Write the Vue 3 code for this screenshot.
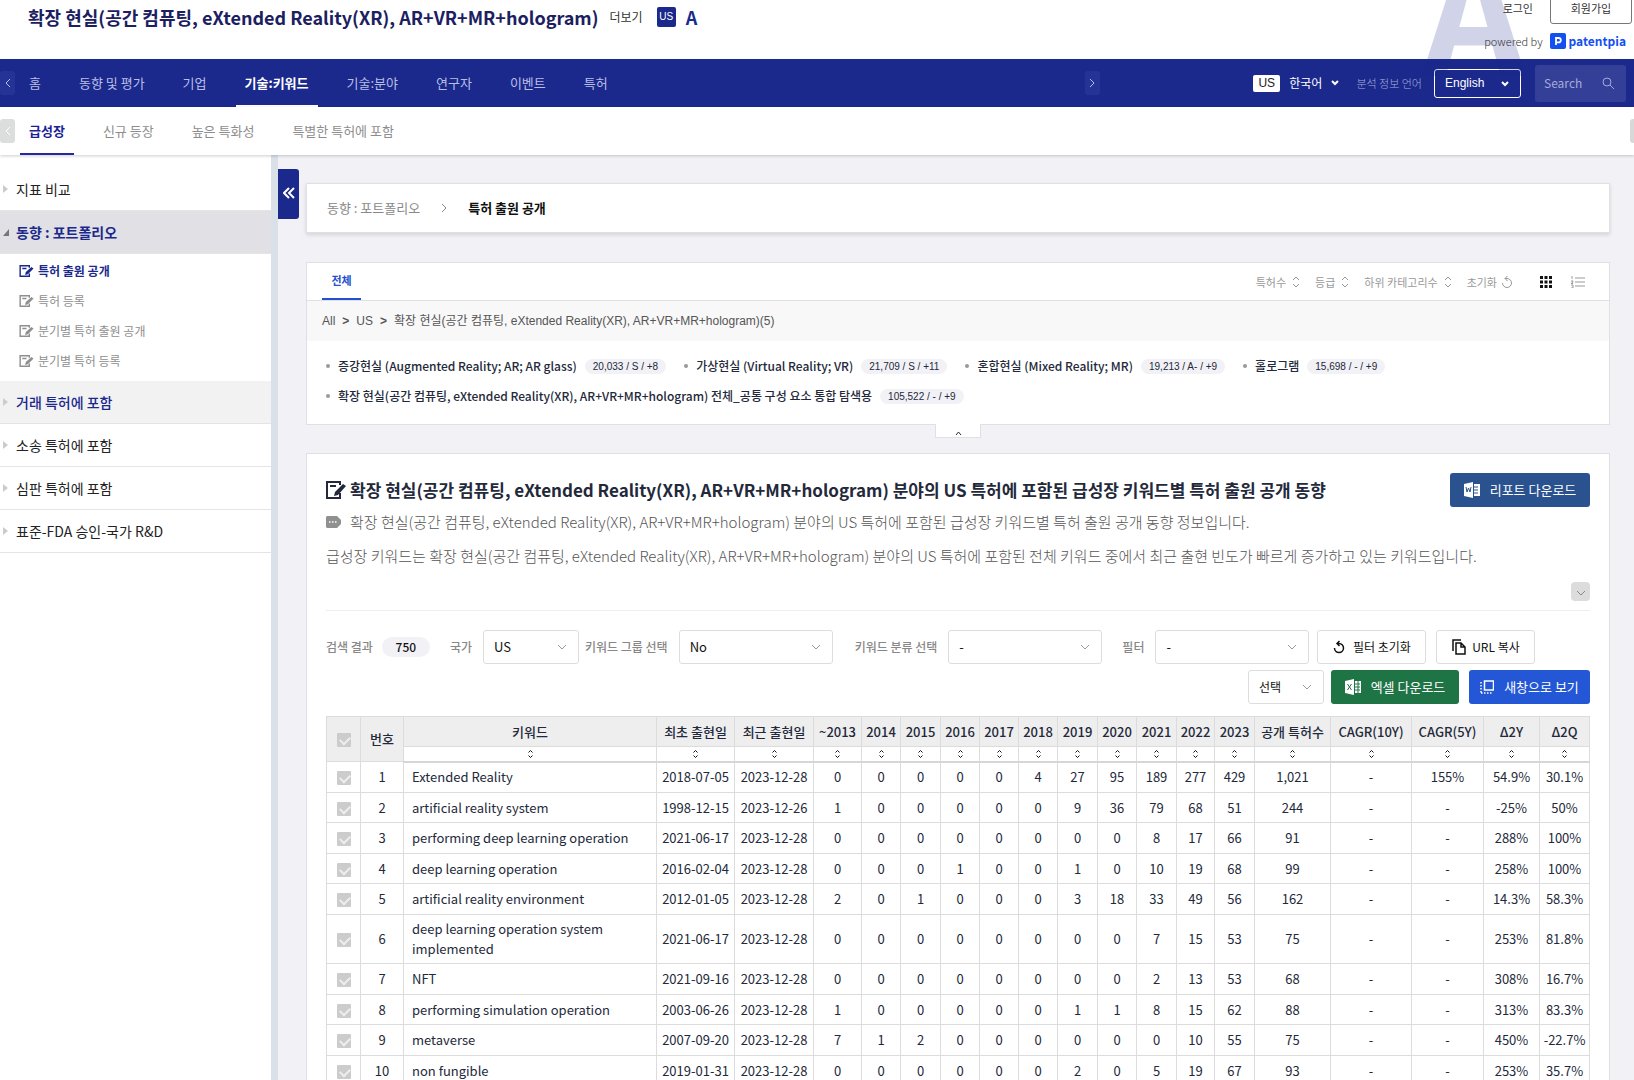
<script setup>
import { ref } from 'vue'

const navItems = ['홈', '동향 및 평가', '기업', '기술:키워드', '기술:분야', '연구자', '이벤트', '특허']
const subItems = ['급성장', '신규 등장', '높은 특화성', '특별한 특허에 포함']
const sideSub = ['특허 출원 공개', '특허 등록', '분기별 특허 출원 공개', '분기별 특허 등록']
const sideRest = ['거래 특허에 포함', '소송 특허에 포함', '심판 특허에 포함', '표준-FDA 승인-국가 R&D']
const sorts = ['특허수', '등급', '하위 카테고리수']
const topics = [
  ['증강현실 (Augmented Reality; AR; AR glass)', '20,033 / S / +8'],
  ['가상현실 (Virtual Reality; VR)', '21,709 / S / +11'],
  ['혼합현실 (Mixed Reality; MR)', '19,213 / A- / +9'],
  ['홀로그램', '15,698 / - / +9'],
  ['확장 현실(공간 컴퓨팅, eXtended Reality(XR), AR+VR+MR+hologram) 전체_공통 구성 요소 통합 탐색용', '105,522 / - / +9'],
]
const columns = [
  ['키워드', 0], ['최초 출현일', 78], ['최근 출현일', 79], ['~2013', 48], ['2014', 39], ['2015', 40],
  ['2016', 39], ['2017', 39], ['2018', 39], ['2019', 40], ['2020', 39], ['2021', 40], ['2022', 38],
  ['2023', 40], ['공개 특허수', 76], ['CAGR(10Y)', 81], ['CAGR(5Y)', 72], ['Δ2Y', 56], ['Δ2Q', 50],
]
const rows = [
  'Extended Reality|2018-07-05|2023-12-28|0|0|0|0|0|4|27|95|189|277|429|1,021|-|155%|54.9%|30.1%',
  'artificial reality system|1998-12-15|2023-12-26|1|0|0|0|0|0|9|36|79|68|51|244|-|-|-25%|50%',
  'performing deep learning operation|2021-06-17|2023-12-28|0|0|0|0|0|0|0|0|8|17|66|91|-|-|288%|100%',
  'deep learning operation|2016-02-04|2023-12-28|0|0|0|1|0|0|1|0|10|19|68|99|-|-|258%|100%',
  'artificial reality environment|2012-01-05|2023-12-28|2|0|1|0|0|0|3|18|33|49|56|162|-|-|14.3%|58.3%',
  'deep learning operation system implemented|2021-06-17|2023-12-28|0|0|0|0|0|0|0|0|7|15|53|75|-|-|253%|81.8%',
  'NFT|2021-09-16|2023-12-28|0|0|0|0|0|0|0|0|2|13|53|68|-|-|308%|16.7%',
  'performing simulation operation|2003-06-26|2023-12-28|1|0|0|0|0|0|1|1|8|15|62|88|-|-|313%|83.3%',
  'metaverse|2007-09-20|2023-12-28|7|1|2|0|0|0|0|0|0|10|55|75|-|-|450%|-22.7%',
  'non fungible|2019-01-31|2023-12-28|0|0|0|0|0|0|2|0|5|19|67|93|-|-|253%|35.7%',
].map((r) => r.split('|'))
const filters = [
  { id: 'country', label: '국가', value: 'US', cls: 'f-country' },
  { id: 'group', label: '키워드 그룹 선택', value: 'No', cls: 'f-group' },
  { id: 'class', label: '키워드 분류 선택', value: '-', cls: 'f-class' },
  { id: 'filter', label: '필터', value: '-', cls: 'f-filter' },
]
const query = ref('')
</script>

<template>
  <div class="app">
    <header class="top">
      <div class="brand">
        <h1>확장 현실(공간 컴퓨팅, eXtended Reality(XR), AR+VR+MR+hologram)</h1>
        <a href="#" class="more">더보기</a>
        <span class="us">US</span>
        <b class="grade">A</b>
      </div>
      <span class="watermark" aria-hidden="true">A</span>
      <div class="account">
        <div class="auth">
          <a href="#">로그인</a>
          <button type="button" class="join">회원가입</button>
        </div>
        <div class="powered">
          <span>powered by</span>
          <svg width="16" height="16" viewBox="0 0 16 16"><rect width="16" height="16" rx="2" fill="#1450f0" /><path d="M6 12V5h2.6a2.2 2.2 0 0 1 0 4.4H6" fill="none" stroke="#fff" stroke-width="1.8" /></svg>
          <b>patentpia</b>
        </div>
      </div>
    </header>

    <nav class="nav">
      <button type="button" class="scroll left" aria-label="이전"><svg width="6" height="10" viewBox="0 0 6 10"><path d="M5 1 1 5l4 4" /></svg></button>
      <a v-for="(n, i) in navItems" :key="n" href="#" :class="{ on: i === 3 }">{{ n }}</a>
      <button type="button" class="scroll right" aria-label="다음"><svg width="6" height="10" viewBox="0 0 6 10"><path d="m1 1 4 4-4 4" /></svg></button>
      <div class="tools">
        <span class="ko-us">US</span>
        <button type="button" class="lang">한국어 <svg width="8" height="6" viewBox="0 0 8 6"><path d="m1 1 3 3 3-3" /></svg></button>
        <label for="lang" class="lang-label">분석 정보 언어</label>
        <span class="select lang-select"><select id="lang"><option>English</option></select><svg width="8" height="6" viewBox="0 0 8 6"><path d="m1 1 3 3 3-3" /></svg></span>
        <span class="search">
          <input v-model="query" type="text" placeholder="Search" aria-label="Search" />
          <svg width="13" height="13" viewBox="0 0 13 13"><circle cx="5" cy="5" r="4" /><path d="m8 8 4 4" /></svg>
        </span>
      </div>
    </nav>

    <nav class="subnav">
      <button type="button" class="scroll left" aria-label="이전"><svg width="6" height="10" viewBox="0 0 6 10"><path d="M5 1 1 5l4 4" /></svg></button>
      <a v-for="(n, i) in subItems" :key="n" href="#" :class="{ on: i === 0 }">{{ n }}</a>
      <span class="edge"></span>
    </nav>

    <div class="body">
      <aside class="side">
        <a href="#" class="item"><i class="tri"></i>지표 비교</a>
        <a href="#" class="item open"><i class="tri"></i>동향 : 포트폴리오</a>
        <ul>
          <li v-for="(s, i) in sideSub" :key="s">
            <a href="#" :class="{ on: i === 0 }">
              <svg width="15" height="12" viewBox="0 0 20 17"><path d="M14 12v4H1V1h13v3M4 5h6" fill="none" stroke="currentColor" stroke-width="2" /><path d="m8 14 1-4 8-7 3 2-8 8z" fill="currentColor" /></svg>{{ s }}
            </a>
          </li>
        </ul>
        <a v-for="(s, i) in sideRest" :key="s" href="#" class="item" :class="{ hover: i === 0 }"><i class="tri"></i>{{ s }}</a>
      </aside>

      <main class="main">
        <button type="button" class="fold" aria-label="메뉴 접기"><svg width="12" height="12" viewBox="0 0 12 12"><path d="M6 1 1 6l5 5M11 1 6 6l5 5" /></svg></button>

        <section class="card crumb">
          <a href="#">동향 : 포트폴리오</a>
          <svg width="6" height="10" viewBox="0 0 6 10"><path d="m1 1 4 4-4 4" /></svg>
          <b>특허 출원 공개</b>
        </section>

        <section class="card topics">
          <div class="tabs">
            <a href="#" class="tab">전체</a>
            <div class="sorts">
              <button v-for="s in sorts" :key="s" type="button">{{ s }}<svg width="8" height="12" viewBox="0 0 8 12"><path d="m1 4 3-3 3 3M1 8l3 3 3-3" /></svg></button>
              <button type="button" class="reset">초기화<svg width="12" height="14" viewBox="0 0 12 14"><path d="M1.500 8a4.500 4.500 0 1 0 4.500-4.500H4M6.500 1 4 3.500 6.500 6" /></svg></button>
              <button type="button" class="grid" aria-label="격자"><svg width="12" height="12" viewBox="0 0 12 12"><path d="M0 0h3v3H0zM4.500 0h3v3h-3zM9 0h3v3H9zM0 4.500h3v3H0zM4.500 4.500h3v3h-3zM9 4.500h3v3H9zM0 9h3v3H0zM4.500 9h3v3h-3zM9 9h3v3H9z" /></svg></button>
              <button type="button" aria-label="목록"><svg width="14" height="12" viewBox="0 0 14 12"><path d="M4 2h10M4 6h10M4 10h10M1 0v3M0 5h2v1L0 7.500h2M0 9h2v3H0" /></svg></button>
            </div>
          </div>
          <div class="path"><a href="#">All</a><b>&gt;</b><a href="#">US</a><b>&gt;</b><a href="#">확장 현실(공간 컴퓨팅, eXtended Reality(XR), AR+VR+MR+hologram)(5)</a></div>
          <ul class="list">
            <li v-for="t in topics" :key="t[0]"><a href="#">{{ t[0] }}</a><span>{{ t[1] }}</span></li>
          </ul>
          <button type="button" class="collapse" aria-label="접기"><svg width="7" height="5" viewBox="0 0 7 5"><path d="m1 4 2.500-3L6 4" /></svg></button>
        </section>

        <section class="card report">
          <div class="head">
            <h2>
              <svg width="20" height="18" viewBox="0 0 20 18"><path d="M14 12v5H1V1h13v3M4 5h6" fill="none" stroke="currentColor" stroke-width="2" /><path d="m8 15 1-4 8-8 3 2-8 9z" fill="currentColor" /></svg>
              확장 현실(공간 컴퓨팅, eXtended Reality(XR), AR+VR+MR+hologram) 분야의 US 특허에 포함된 급성장 키워드별 특허 출원 공개 동향
            </h2>
            <button type="button" class="btn word">
              <svg width="16" height="16" viewBox="0 0 16 16"><path d="M0 2 9 0v16L0 14zM10 2h6v12h-6z" fill="#fff" /><path d="m2 5 1 5 1.500-4L6 10l1-5" fill="none" stroke="#29528f" /><path d="M10 5h4M10 8h4M10 11h4" stroke="#29528f" /></svg>리포트 다운로드
            </button>
          </div>
          <p class="desc">
            <svg width="15" height="12" viewBox="0 0 15 12"><path d="M1 0h10l4 4v4l-4 4H1l-1-1V1z" fill="#909090" /><path d="M3 6h1.500M6 6h1.500M9 6h1.500" stroke="#fff" stroke-width="1.500" /></svg>
            확장 현실(공간 컴퓨팅, eXtended Reality(XR), AR+VR+MR+hologram) 분야의 US 특허에 포함된 급성장 키워드별 특허 출원 공개 동향 정보입니다.
          </p>
          <p class="desc long">급성장 키워드는 확장 현실(공간 컴퓨팅, eXtended Reality(XR), AR+VR+MR+hologram) 분야의 US 특허에 포함된 전체 키워드 중에서 최근 출현 빈도가 빠르게 증가하고 있는 키워드입니다.</p>
          <div class="expand"><button type="button" aria-label="펼치기"><svg width="10" height="7" viewBox="0 0 10 7"><path d="m1 1 4 4 4-4" /></svg></button></div>

          <div class="filters">
            <span class="lbl">검색 결과</span><span class="count">750</span>
            <template v-for="f in filters" :key="f.id">
              <label :for="f.id" class="lbl" :class="f.cls">{{ f.label }}</label>
              <span class="select" :class="f.cls"><select :id="f.id"><option>{{ f.value }}</option></select><svg width="10" height="7" viewBox="0 0 10 7"><path d="m1 1 4 4 4-4" /></svg></span>
            </template>
            <button type="button" class="btn plain b-reset"><svg width="12" height="14" viewBox="0 0 12 14"><path d="M1.500 8a4.500 4.500 0 1 0 4.500-4.500H4M6.500 1 4 3.500 6.500 6" fill="none" stroke="#111" stroke-width="1.500" /></svg>필터 초기화</button>
            <button type="button" class="btn plain b-copy"><svg width="14" height="16" viewBox="0 0 14 16"><path d="M1 12V1h8M4 4h5l4 4v7H4zM9 4v4h4" fill="none" stroke="#111" stroke-width="1.500" /></svg>URL 복사</button>
          </div>
          <div class="actions">
            <span class="select pick"><select aria-label="선택"><option>선택</option></select><svg width="10" height="7" viewBox="0 0 10 7"><path d="m1 1 4 4 4-4" /></svg></span>
            <button type="button" class="btn excel"><svg width="16" height="16" viewBox="0 0 16 16"><path d="M0 2 9 0v16L0 14zM10 2h6v12h-6z" fill="#fff" /><path d="m2.500 5 4 6m0-6-4 6M10 5h5M10 8h5M10 11h5M13 2v12" fill="none" stroke="#1f7445" /></svg>엑셀 다운로드</button>
            <button type="button" class="btn window"><svg width="14" height="14" viewBox="0 0 14 14"><path d="M4.500 1h9v9h-9z" fill="none" stroke="#fff" stroke-width="1.500" /><path d="M1 2v11M1 13h11" fill="none" stroke="#fff" stroke-width="1.500" stroke-dasharray="1.500 1.500" /></svg>새창으로 보기</button>
          </div>

          <table>
            <colgroup>
              <col class="c-check" /><col class="c-no" />
              <col v-for="c in columns" :key="c[0]" :style="c[1] ? { width: c[1] + 'px' } : null" />
            </colgroup>
            <thead>
              <tr>
                <th rowspan="2"><input type="checkbox" checked aria-label="전체 선택" /></th>
                <th rowspan="2">번호</th>
                <th v-for="c in columns" :key="c[0]">{{ c[0] }}</th>
              </tr>
              <tr class="order">
                <td v-for="c in columns" :key="c[0]"><svg width="5" height="8" viewBox="0 0 5 8"><path d="M.5 2.500l2-2 2 2M.5 5.500l2 2 2-2" /></svg></td>
              </tr>
            </thead>
            <tbody>
              <tr v-for="(r, i) in rows" :key="r[0]">
                <td><input type="checkbox" checked :aria-label="r[0]" /></td>
                <td>{{ i + 1 }}</td>
                <td v-for="(c, j) in r" :key="j" :class="{ kw: j === 0 }">{{ c }}</td>
              </tr>
            </tbody>
          </table>
        </section>
      </main>
    </div>
  </div>
</template>

<style>
body { margin: 0; background: #f2f1f6; }
</style>

<style scoped>
* { box-sizing: border-box; }
.app { height: 100vh; overflow: hidden; display: flex; flex-direction: column; font-family: "Noto Sans CJK KR", sans-serif; font-size: 13px; line-height: 20px; color: #23293a; }
a { color: inherit; text-decoration: none; }
button, input, select { font: inherit; color: inherit; margin: 0; padding: 0; border: 0; background: none; }
button { white-space: nowrap; }
ul { list-style: none; margin: 0; padding: 0; }
h1, h2, p { margin: 0; }
svg { flex: none; fill: none; stroke: currentColor; }

.top { flex: none; height: 59px; display: flex; justify-content: space-between; background: #fff; position: relative; }
.brand { display: flex; align-items: center; height: 34px; padding-left: 28px; }
h1 { font-size: 18px; font-weight: 700; color: #1b2060; white-space: nowrap; }
.more { margin-left: 11px; font-size: 12px; color: #333; }
.us { margin: 0 10px 0 14px; width: 19px; height: 20px; border-radius: 2px; background: #1b298d; color: #fff; font: 10px/20px "Liberation Sans", sans-serif; text-align: center; }
.grade { font-size: 18px; color: #1b2a8c; }
.watermark { position: absolute; z-index: 1; right: 109px; top: -84px; font-size: 160px; line-height: 180px; font-weight: 700; color: rgba(27, 41, 141, .2); pointer-events: none; }
.account { position: relative; z-index: 2; display: flex; flex-direction: column; justify-content: flex-end; align-items: flex-end; gap: 7px; padding: 0 8px 9px 0; font-size: 11px; color: #333; }
.auth { display: flex; align-items: center; gap: 17px; margin-right: -6px; }
.join { width: 82px; height: 32px; border: 1px solid #777; border-radius: 3px; }
.powered { display: flex; align-items: center; gap: 7px; height: 19px; font-weight: 300; }
.powered svg { stroke: none; }
.powered b { margin-left: -4px; font-size: 12px; font-weight: 700; color: #1450f0; }

.nav { flex: none; height: 48px; display: flex; background: #1b298d; position: relative; }
.nav > a, .subnav > a { display: flex; align-items: center; padding: 0 9px; margin-right: 20px; color: #b9bfe4; white-space: nowrap; }
.subnav > a { color: #8d8d8d; }
.nav > a.on { color: #fff; font-weight: 700; box-shadow: inset 0 -2px #fff; }
.scroll { display: flex; align-items: center; justify-content: center; width: 15px; height: 24px; align-self: center; border-radius: 3px; background: #263396; color: #b9bfe4; }
.scroll.left { margin-right: 5px; }
.nav .right { margin-left: 448px; }
.tools { display: flex; align-items: center; margin-left: auto; padding-right: 8px; }
.ko-us { width: 27px; height: 17px; margin-right: 9px; border-radius: 2px; background: #fff; color: #222; font: 12px/17px "Liberation Sans", sans-serif; text-align: center; }
.lang { display: flex; align-items: center; gap: 9px; color: #fff; font-size: 12px; }
.lang svg, .lang-select svg { stroke-width: 2; }
.lang-label { margin: 0 12px 0 17px; font-size: 11px; font-weight: 300; color: #a5acd9; }
.select { position: relative; display: block; height: 34px; }
.select select { appearance: none; width: 100%; height: 100%; padding-left: 10px; border: 1px solid #ddd; border-radius: 3px; background: #fff; color: #111; }
.select svg { position: absolute; right: 12px; top: 14px; color: #999; pointer-events: none; }
.lang-select { width: 87px; height: 29px; margin-right: 14px; }
.lang-select select { background: transparent; border-color: #fff; color: #fff; font: 12px/20px "Liberation Sans", sans-serif; }
.lang-select svg { top: 12px; color: #fff; }
.search { display: flex; align-items: center; width: 91px; height: 37px; padding: 0 11px 0 9px; border-radius: 3px; background: #343f98; color: #a5acd9; }
.search input { width: 100%; min-width: 0; outline: 0; font-size: 12px; }
.search input::placeholder { color: #a5acd9; opacity: 1; }

.subnav { flex: none; height: 48px; display: flex; background: #fff; position: relative; z-index: 1; box-shadow: 0 1px 3px rgba(0, 0, 0, .2); }
.subnav > a.on { color: #1b1e96; font-weight: 700; box-shadow: inset 0 -2px #2528a0; }
.subnav .scroll { background: #dcdede; color: #fff; }
.edge { width: 4px; height: 24px; margin-left: auto; align-self: center; border-radius: 3px 0 0 3px; background: #d8d8d8; }

.body { flex: 1; min-height: 0; display: flex; }
.side { flex: none; width: 278px; padding-top: 13px; background: #fff; border-right: 7px solid #dae0e8; }
.item { display: flex; align-items: center; height: 43px; border-bottom: 1px solid #e4e4e4; font-size: 14px; color: #222; }
.tri { width: 5px; margin: 0 8px 0 3px; border: solid transparent; border-width: 4px 0 4px 5px; border-left-color: #ccc; }
.item.open { background: #e1e0e5; color: #1b298d; font-weight: 700; }
.open .tri { border-width: 0 0 7px 6px; border-color: transparent transparent #777 transparent; width: 6px; margin-right: 7px; }
.item.hover { background: #f2f2f2; color: #1b298d; font-weight: 500; }
.side ul { padding: 2px 0 5px; }
.side li a { display: flex; align-items: center; gap: 4px; height: 30px; padding-left: 19px; font-size: 12px; color: #8f8f8f; }
.side li svg { stroke: none; }
.side li a.on { color: #1b298d; font-weight: 700; }

.main { flex: 1; min-width: 0; padding: 28px 24px 0 28px; position: relative; }
.fold { position: absolute; left: 0; top: 14px; width: 21px; height: 50px; border-radius: 0 3px 3px 0; background: #1b298d; color: #fff; }
.fold svg { stroke-width: 2; }
.card { background: #fff; border: 1px solid #dfdfe5; }
.crumb { height: 50px; display: flex; align-items: center; gap: 21px; padding-left: 20px; color: #888; box-shadow: 0 2px 4px rgba(0, 0, 0, .12); }
.crumb b { color: #111; }
.topics { position: relative; margin-top: 29px; padding-bottom: 3px; }
.tabs { display: flex; justify-content: space-between; height: 38px; padding: 0 24px 0 15px; border-bottom: 1px solid #dfdfe5; }
.tab { width: 39px; line-height: 35px; text-align: center; font-size: 11px; font-weight: 700; color: #2450cf; border-bottom: 2px solid #2450cf; }
.sorts { display: flex; align-items: center; gap: 15px; font-size: 11px; color: #999; }
.sorts button { display: flex; align-items: center; gap: 6px; }
.sorts .reset { gap: 4px; }
.sorts .grid { margin: 0 4px 0 12px; color: #111; }
.grid svg { fill: currentColor; stroke: none; }
.path { display: flex; gap: 7px; height: 40px; align-items: center; padding-left: 15px; background: #f8f8f8; font-family: "Liberation Sans", "Noto Sans CJK KR", sans-serif; font-size: 12px; color: #555; }
.list { display: flex; flex-wrap: wrap; padding: 10px 19px; column-gap: 18px; }
.list li { display: flex; align-items: center; height: 30px; font-size: 12px; font-weight: 500; color: #23293a; }
.list li::before { content: ""; width: 4px; height: 4px; margin-right: 8px; border-radius: 50%; background: #999; }
.list span { margin-left: 8px; padding: 0 8px; border-radius: 8px; background: #f2f1f6; font: 10px/15px "Liberation Sans", sans-serif; }
.collapse { position: absolute; left: 50%; bottom: -14px; width: 46px; height: 14px; margin-left: -23px; background: #fff; border: 1px solid #dfdfe5; border-top: 0; line-height: 10px; }

.report { margin-top: 28px; padding: 19px 19px 40px; }
.head { display: flex; justify-content: space-between; align-items: center; }
h2 { display: flex; align-items: center; gap: 4px; font-size: 17px; font-weight: 700; color: #23293a; white-space: nowrap; }
h2 svg { stroke: none; }
.btn { display: flex; align-items: center; justify-content: center; height: 34px; border-radius: 3px; color: #fff; gap: 10px; }
.btn svg { stroke: none; }
.word { width: 140px; background: #29528f; }
.excel { width: 128px; background: #1f7445; }
.window { width: 121px; margin-left: 3px; background: #2457d6; }
.desc { display: flex; align-items: center; gap: 9px; height: 30px; font-size: 15px; font-weight: 300; color: #555; white-space: nowrap; }
.desc svg { stroke: none; }
.desc.long { margin-top: 4px; }
.expand { display: flex; justify-content: flex-end; margin-top: 11px; height: 29px; border-bottom: 1px solid #eee; }
.expand button { width: 19px; height: 19px; border-radius: 4px; background: #dcdcdc; color: #888; line-height: 12px; }
.filters { display: flex; align-items: center; margin-top: 19px; white-space: nowrap; }
.lbl { font-size: 12px; font-weight: 500; color: #888; }
.count { width: 48px; margin-left: 9px; border-radius: 10px; background: #f2f1f6; text-align: center; font-size: 12px; font-weight: 500; color: #111; }
.lbl.f-country { margin-left: 20px; }
.lbl.f-group { margin-left: 6px; }
.lbl.f-class { margin-left: 22px; }
.lbl.f-filter { margin-left: 20px; }
.filters .select { margin-left: 11px; width: 154px; }
.filters .select.f-country { width: 96px; }
.plain { border: 1px solid #ddd; color: #111; font-size: 12px; background: #fff; gap: 8px; }
.b-reset { width: 109px; margin-left: 8px; }
.b-copy { width: 99px; margin-left: 10px; gap: 6px; }
.actions { display: flex; justify-content: flex-end; gap: 7px; margin-top: 6px; }
.pick { width: 76px; }
.pick select { font-size: 12px; }

table { width: 100%; margin-top: 12px; table-layout: fixed; border-collapse: collapse; }
.c-check { width: 34px; }
.c-no { width: 43px; }
th, td { padding: 0; border: 1px solid #dcdcdc; text-align: center; white-space: nowrap; font-weight: 400; }
th { height: 30px; background: #eee; font-weight: 500; border-bottom-color: #dcdcdc; }
.order td { height: 15px; line-height: 8px; border-bottom: 2px solid #d6d6d6; color: #111; }
tbody tr { height: 30px; }
tbody tr:nth-child(odd) { height: 31px; }
td.kw { padding: 4px 8px; text-align: left; white-space: normal; }
input[type="checkbox"] { appearance: none; display: block; width: 14px; height: 14px; margin: 2px auto 0; border-radius: 1px; background: #ccc; }
input[type="checkbox"]::before { content: ""; display: block; width: 8px; height: 5px; border: solid #eee; border-width: 0 0 2px 2px; transform: translate(3px, 3px) rotate(-45deg); }
</style>
